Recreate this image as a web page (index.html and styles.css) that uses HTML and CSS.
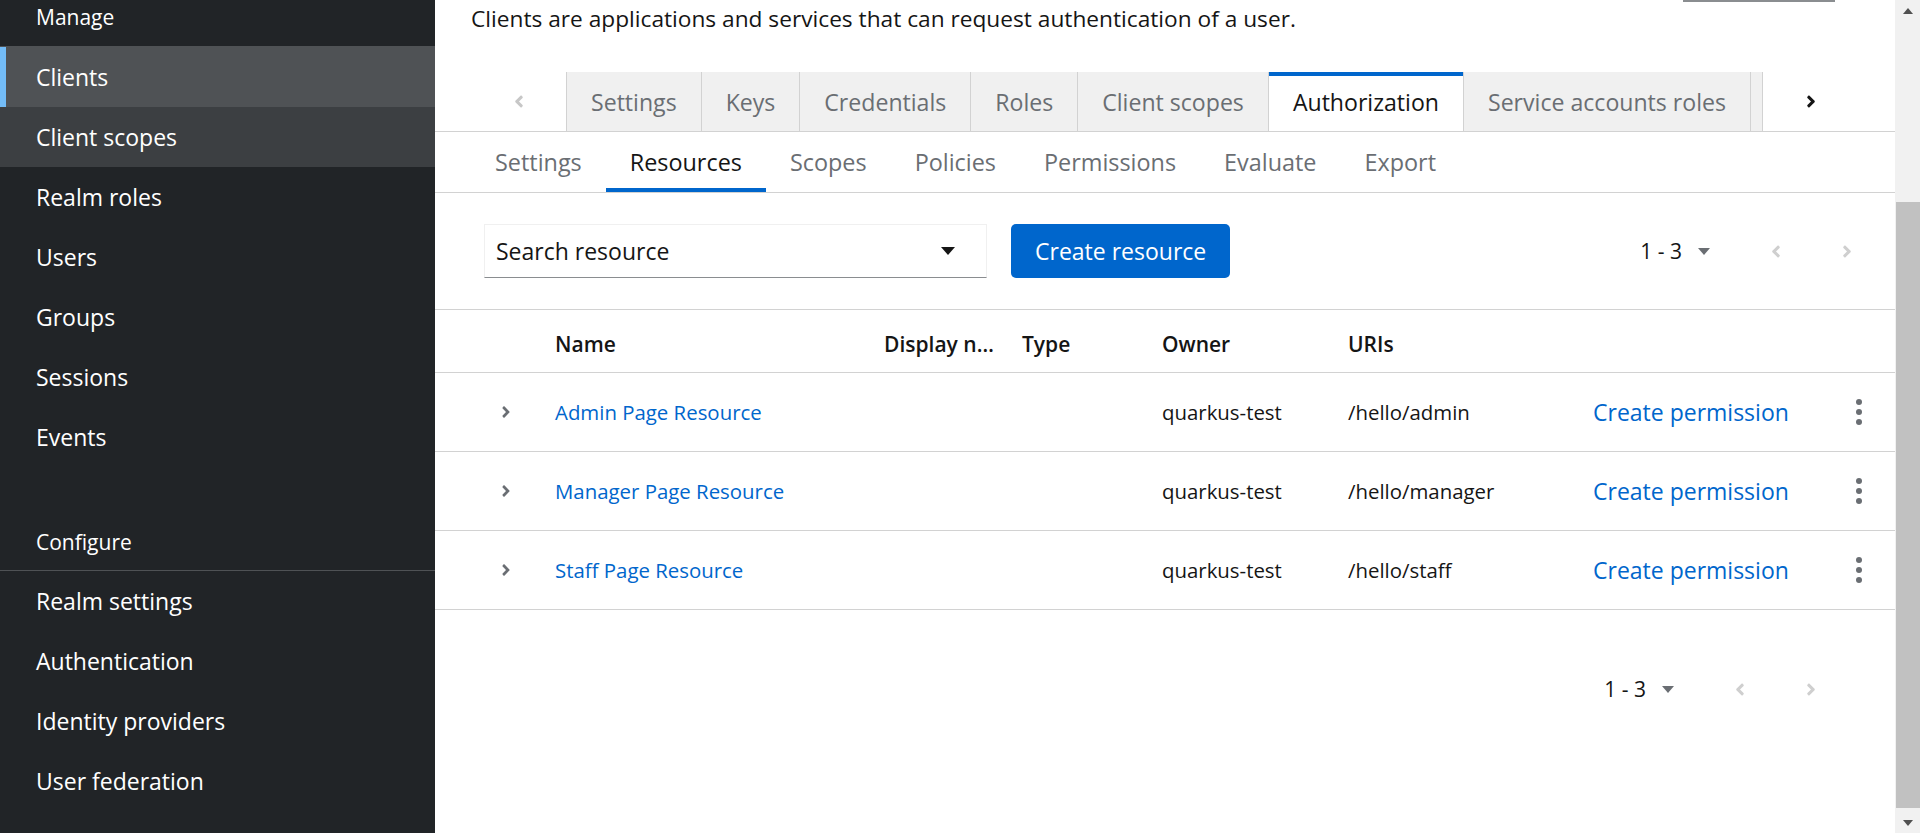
FILE: index.html
```html
<!DOCTYPE html>
<html lang="en">
<head>
<meta charset="utf-8">
<title>Keycloak - Client authorization resources</title>
<link rel="stylesheet" href="styles.css">
</head>
<body>
<div class="app">
  <nav class="sidebar">
    <section class="nav-section">
      <h2 class="nav-title">Manage</h2>
      <ul class="nav-list">
        <li class="nav-item active">Clients</li>
        <li class="nav-item hover">Client scopes</li>
        <li class="nav-item">Realm roles</li>
        <li class="nav-item">Users</li>
        <li class="nav-item">Groups</li>
        <li class="nav-item">Sessions</li>
        <li class="nav-item">Events</li>
      </ul>
    </section>
    <section class="nav-section">
      <h2 class="nav-title">Configure</h2>
      <ul class="nav-list">
        <li class="nav-item">Realm settings</li>
        <li class="nav-item">Authentication</li>
        <li class="nav-item">Identity providers</li>
        <li class="nav-item">User federation</li>
      </ul>
    </section>
  </nav>

  <main class="main">
    <div class="page-head">
      <p class="desc">Clients are applications and services that can request authentication of a user.</p>
      <div class="action-edge"></div>
    </div>

    <div class="tabs">
      <div class="scroll-btn disabled">
        <svg class="chev-lg" viewBox="0 0 256 512"><path d="M31.7 239l136-136c9.4-9.4 24.6-9.4 33.9 0l22.6 22.6c9.4 9.4 9.4 24.6 0 33.9L127.9 256l96.4 96.4c9.4 9.4 9.4 24.6 0 33.9L201.7 409c-9.4 9.4-24.6 9.4-33.9 0l-136-136c-9.5-9.4-9.5-24.6-.1-34z"/></svg>
      </div>
      <ul class="tab-list">
        <li class="tab">Settings</li>
        <li class="tab">Keys</li>
        <li class="tab">Credentials</li>
        <li class="tab">Roles</li>
        <li class="tab">Client scopes</li>
        <li class="tab active">Authorization</li>
        <li class="tab">Service accounts roles</li>
        <li class="tab stub"></li>
      </ul>
      <div class="scroll-btn">
        <svg class="chev-lg" viewBox="0 0 256 512"><path d="M224.3 273l-136 136c-9.4 9.4-24.6 9.4-33.9 0l-22.6-22.6c-9.4-9.4-9.4-24.6 0-33.9l96.4-96.4-96.4-96.4c-9.4-9.4-9.4-24.6 0-33.9L54.3 103c9.4-9.4 24.6-9.4 33.9 0l136 136c9.5 9.4 9.5 24.6.1 34z"/></svg>
      </div>
    </div>

    <ul class="subtabs">
      <li class="subtab">Settings</li>
      <li class="subtab active">Resources</li>
      <li class="subtab">Scopes</li>
      <li class="subtab">Policies</li>
      <li class="subtab">Permissions</li>
      <li class="subtab">Evaluate</li>
      <li class="subtab">Export</li>
    </ul>

    <div class="toolbar">
      <div class="select">
        <span>Search resource</span>
        <svg class="caret-lg" viewBox="0 0 14 8"><path d="M0 0h14L7 8z"/></svg>
      </div>
      <button class="btn-primary">Create resource</button>
      <div class="pagination">
        <div class="page-toggle">
          <span>1 - 3</span>
          <svg class="caret-sm" viewBox="0 0 12 7"><path d="M0 0h12L6 7z"/></svg>
        </div>
        <div class="page-btn prev">
          <svg class="chev-md" viewBox="0 0 256 512"><path d="M31.7 239l136-136c9.4-9.4 24.6-9.4 33.9 0l22.6 22.6c9.4 9.4 9.4 24.6 0 33.9L127.9 256l96.4 96.4c9.4 9.4 9.4 24.6 0 33.9L201.7 409c-9.4 9.4-24.6 9.4-33.9 0l-136-136c-9.5-9.4-9.5-24.6-.1-34z"/></svg>
        </div>
        <div class="page-btn next">
          <svg class="chev-md" viewBox="0 0 256 512"><path d="M224.3 273l-136 136c-9.4 9.4-24.6 9.4-33.9 0l-22.6-22.6c-9.4-9.4-9.4-24.6 0-33.9l96.4-96.4-96.4-96.4c-9.4-9.4-9.4-24.6 0-33.9L54.3 103c9.4-9.4 24.6-9.4 33.9 0l136 136c9.5 9.4 9.5 24.6.1 34z"/></svg>
        </div>
      </div>
    </div>

    <div class="table">
      <div class="thead">
        <div class="cell"></div>
        <div class="cell">Name</div>
        <div class="cell trunc">Display name</div>
        <div class="cell">Type</div>
        <div class="cell">Owner</div>
        <div class="cell">URIs</div>
        <div class="cell"></div>
      </div>

      <div class="trow">
        <div class="cell toggle"><svg class="chev-sm" viewBox="0 0 256 512"><path d="M224.3 273l-136 136c-9.4 9.4-24.6 9.4-33.9 0l-22.6-22.6c-9.4-9.4-9.4-24.6 0-33.9l96.4-96.4-96.4-96.4c-9.4-9.4-9.4-24.6 0-33.9L54.3 103c9.4-9.4 24.6-9.4 33.9 0l136 136c9.5 9.4 9.5 24.6.1 34z"/></svg></div>
        <div class="cell link">Admin Page Resource</div>
        <div class="cell"></div>
        <div class="cell"></div>
        <div class="cell">quarkus-test</div>
        <div class="cell">/hello/admin</div>
        <div class="cell actions"><span class="link-btn">Create permission</span><svg class="kebab" viewBox="0 0 6 26"><circle cx="3" cy="3" r="3"/><circle cx="3" cy="13" r="3"/><circle cx="3" cy="23" r="3"/></svg></div>
      </div>

      <div class="trow">
        <div class="cell toggle"><svg class="chev-sm" viewBox="0 0 256 512"><path d="M224.3 273l-136 136c-9.4 9.4-24.6 9.4-33.9 0l-22.6-22.6c-9.4-9.4-9.4-24.6 0-33.9l96.4-96.4-96.4-96.4c-9.4-9.4-9.4-24.6 0-33.9L54.3 103c9.4-9.4 24.6-9.4 33.9 0l136 136c9.5 9.4 9.5 24.6.1 34z"/></svg></div>
        <div class="cell link">Manager Page Resource</div>
        <div class="cell"></div>
        <div class="cell"></div>
        <div class="cell">quarkus-test</div>
        <div class="cell">/hello/manager</div>
        <div class="cell actions"><span class="link-btn">Create permission</span><svg class="kebab" viewBox="0 0 6 26"><circle cx="3" cy="3" r="3"/><circle cx="3" cy="13" r="3"/><circle cx="3" cy="23" r="3"/></svg></div>
      </div>

      <div class="trow">
        <div class="cell toggle"><svg class="chev-sm" viewBox="0 0 256 512"><path d="M224.3 273l-136 136c-9.4 9.4-24.6 9.4-33.9 0l-22.6-22.6c-9.4-9.4-9.4-24.6 0-33.9l96.4-96.4-96.4-96.4c-9.4-9.4-9.4-24.6 0-33.9L54.3 103c9.4-9.4 24.6-9.4 33.9 0l136 136c9.5 9.4 9.5 24.6.1 34z"/></svg></div>
        <div class="cell link">Staff Page Resource</div>
        <div class="cell"></div>
        <div class="cell"></div>
        <div class="cell">quarkus-test</div>
        <div class="cell">/hello/staff</div>
        <div class="cell actions"><span class="link-btn">Create permission</span><svg class="kebab" viewBox="0 0 6 26"><circle cx="3" cy="3" r="3"/><circle cx="3" cy="13" r="3"/><circle cx="3" cy="23" r="3"/></svg></div>
      </div>
    </div>

    <div class="bottom-bar">
      <div class="pagination">
        <div class="page-toggle">
          <span>1 - 3</span>
          <svg class="caret-sm" viewBox="0 0 12 7"><path d="M0 0h12L6 7z"/></svg>
        </div>
        <div class="page-btn prev">
          <svg class="chev-md" viewBox="0 0 256 512"><path d="M31.7 239l136-136c9.4-9.4 24.6-9.4 33.9 0l22.6 22.6c9.4 9.4 9.4 24.6 0 33.9L127.9 256l96.4 96.4c9.4 9.4 9.4 24.6 0 33.9L201.7 409c-9.4 9.4-24.6 9.4-33.9 0l-136-136c-9.5-9.4-9.5-24.6-.1-34z"/></svg>
        </div>
        <div class="page-btn next">
          <svg class="chev-md" viewBox="0 0 256 512"><path d="M224.3 273l-136 136c-9.4 9.4-24.6 9.4-33.9 0l-22.6-22.6c-9.4-9.4-9.4-24.6 0-33.9l96.4-96.4-96.4-96.4c-9.4-9.4-9.4-24.6 0-33.9L54.3 103c9.4-9.4 24.6-9.4 33.9 0l136 136c9.5 9.4 9.5 24.6.1 34z"/></svg>
        </div>
      </div>
    </div>
  </main>

  <div class="scrollbar">
    <div class="sb-arrow"><svg viewBox="0 0 10 6"><path d="M0 6L5 0l5 6z"/></svg></div>
    <div class="sb-track"><div class="sb-thumb"></div></div>
    <div class="sb-arrow"><svg viewBox="0 0 10 6"><path d="M0 0h10L5 6z"/></svg></div>
  </div>
</div>
</body>
</html>
```

FILE: styles.css
```css
* { box-sizing: border-box; }

html, body {
  margin: 0;
  padding: 0;
}

body {
  font-family: "Open Sans", "Noto Sans", sans-serif;
  color: #151515;
  background: #fff;
  overflow: hidden;
}

ul { list-style: none; margin: 0; padding: 0; }

.app {
  display: flex;
  width: 1920px;
  height: 833px;
}

/* ---------- Sidebar ---------- */
.sidebar {
  width: 435px;
  flex: none;
  background: #212427;
  color: #fff;
  padding-top: 2px;
}

.nav-section + .nav-section { margin-top: 60px; }

.nav-title {
  margin: 0;
  padding: 0 36px 12px;
  font-size: 21px;
  font-weight: 400;
  line-height: 31.5px;
  color: #fff;
  border-bottom: 1px solid #4f5255;
}

.nav-item {
  height: 60px;
  display: flex;
  align-items: center;
  padding-left: 36px;
  font-size: 23px;
  color: #fff;
}

.nav-item.active {
  background: #4f5255;
  box-shadow: inset 6px 0 0 #73bcf7;
}

.nav-item.hover { background: #3c3f42; }

/* ---------- Main ---------- */
.main {
  flex: 1;
  min-width: 0;
  display: flex;
  flex-direction: column;
}

.page-head {
  height: 72px;
  display: flex;
  justify-content: space-between;
  align-items: flex-start;
  padding: 0 60px 0 36px;
}

.desc {
  margin: 3px 0 0;
  font-size: 22.7px;
  line-height: 32px;
}

.action-edge {
  width: 152px;
  height: 2px;
  background: #8a8d90;
}

/* primary box tabs */
.tabs {
  display: flex;
  height: 60px;
  padding: 0 36px;
  border-bottom: 1px solid #d2d2d2;
}

.scroll-btn {
  width: 95px;
  flex: none;
  display: flex;
  align-items: center;
  justify-content: center;
  color: #151515;
}

.scroll-btn:last-child { width: 96px; }

.scroll-btn.disabled { color: #c7c7c7; }

.chev-lg { width: 10px; height: 19px; fill: currentColor; }

.tab-list {
  flex: 1;
  min-width: 0;
  display: flex;
  overflow: hidden;
}

.tab {
  display: flex;
  flex: none;
  align-items: center;
  padding: 0 24px;
  background: #f0f0f0;
  border-left: 1px solid #d2d2d2;
  font-size: 23.1px;
  color: #6a6e73;
  white-space: nowrap;
}

.tab.active {
  background: #fff;
  color: #151515;
  box-shadow: inset 0 4px 0 #06c;
}

.tab.stub {
  flex: 1;
  padding: 0;
  border-right: 1px solid #d2d2d2;
}

/* secondary tabs */
.subtabs {
  display: flex;
  height: 61px;
  padding: 0 36px;
  border-bottom: 1px solid #d2d2d2;
}

.subtab {
  display: flex;
  align-items: center;
  padding: 0 24px;
  font-size: 23.4px;
  color: #6a6e73;
}

.subtab.active {
  color: #151515;
  box-shadow: inset 0 -4px 0 #06c;
}

/* toolbar */
.toolbar {
  display: flex;
  align-items: center;
  padding: 31px 36px 31px 49px;
  border-bottom: 1px solid #d2d2d2;
}

.select {
  width: 503px;
  height: 54px;
  display: flex;
  align-items: center;
  justify-content: space-between;
  padding: 0 31px 0 11px;
  border: 1px solid #f0f0f0;
  border-bottom-color: #8a8d90;
  font-size: 23px;
}

.caret-lg { width: 14px; height: 8px; fill: #151515; }

.btn-primary {
  margin-left: 24px;
  height: 54px;
  padding: 0 24px;
  border: 0;
  border-radius: 5px;
  background: #06c;
  color: #fff;
  font-family: inherit;
  font-size: 23px;
}

.pagination {
  margin-left: auto;
  display: flex;
  align-items: center;
}

.page-toggle {
  display: flex;
  align-items: center;
  gap: 16px;
  font-size: 21px;
  color: #151515;
}

.caret-sm { width: 12px; height: 7px; fill: #6a6e73; }

.page-btn {
  width: 24px;
  display: flex;
  justify-content: center;
  color: #cfcfcf;
}

.page-btn.prev { margin-left: 54px; }
.page-btn.next { margin-left: 47px; }

.chev-md { width: 10px; height: 19px; fill: currentColor; }

/* table */
.thead,
.trow {
  display: grid;
  grid-template-columns: 120px 329px 138px 140px 186px 245px 1fr;
  align-items: center;
  border-bottom: 1px solid #d2d2d2;
  font-size: 20.4px;
}

.thead {
  height: 63px;
  padding-top: 5px;
  font-weight: 600;
  font-size: 21px;
}

.trow { height: 79px; }

.cell {
  min-width: 0;
  white-space: nowrap;
}

.trunc {
  overflow: hidden;
  text-overflow: ellipsis;
  padding-right: 22px;
}

.toggle {
  display: flex;
  padding-left: 66px;
  color: #6a6e73;
}

.chev-sm { width: 10px; height: 18px; fill: currentColor; }

.link { color: #06c; }

.actions {
  display: flex;
  align-items: center;
  justify-content: space-between;
  padding-right: 33px;
}

.link-btn {
  font-size: 23px;
  color: #06c;
}

.kebab { width: 6px; height: 26px; fill: #6a6e73; }

/* bottom pagination */
.bottom-bar {
  display: flex;
  margin-top: 52px;
  height: 54px;
  align-items: center;
  padding-right: 72px;
}

/* fake scrollbar */
.scrollbar {
  width: 25px;
  flex: none;
  display: flex;
  flex-direction: column;
  background: #f1f1f1;
}

.sb-arrow {
  height: 21px;
  display: flex;
  align-items: center;
  justify-content: center;
}

.sb-arrow svg { width: 10px; height: 6px; fill: #505050; }

.sb-track { flex: 1; }

.sb-thumb {
  margin-top: 181px;
  margin-left: 1px;
  height: 606px;
  background: #c1c1c1;
}
```
